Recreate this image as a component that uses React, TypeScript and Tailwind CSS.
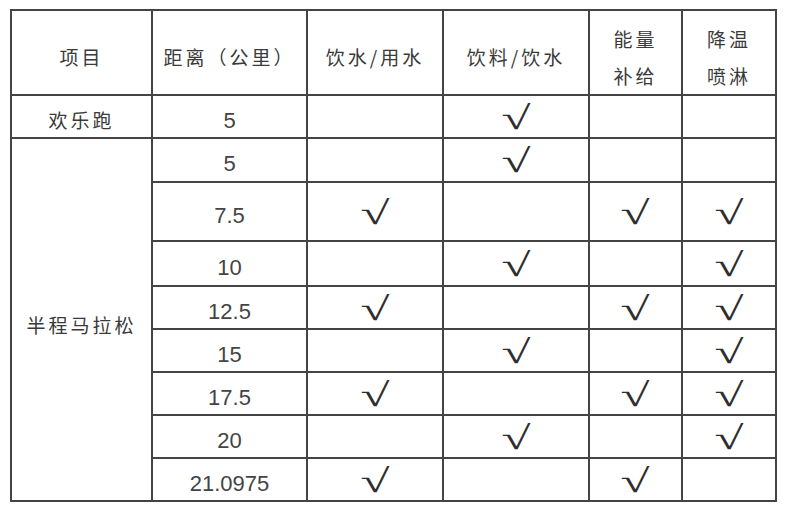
const rows: { d: string; c: boolean[] }[] = [
  { d: "5", c: [false, true, false, false] },
  { d: "7.5", c: [true, false, true, true] },
  { d: "10", c: [false, true, false, true] },
  { d: "12.5", c: [true, false, true, true] },
  { d: "15", c: [false, true, false, true] },
  { d: "17.5", c: [true, false, true, true] },
  { d: "20", c: [false, true, false, true] },
  { d: "21.0975", c: [true, false, true, false] },
];

const heights = ["h-[44px]", "h-[59px]", "h-[45px]", "h-[43px]", "h-[43px]", "h-[43px]", "h-[43px]", "h-[43px]"];

const cell = "border-2 border-[#444] text-center align-middle p-0 pt-[7px]";
const head = "border-2 border-[#444] text-center align-middle p-0 pt-[9px] font-normal";
const cjk = "font-['Noto_Sans_CJK_SC',sans-serif] text-[19px] tracking-[3px] text-[#3a3a3a]";
const num = "font-['Liberation_Sans',sans-serif] text-[22px] text-[#444]";

const Check = ({ on }: { on: boolean }) =>
  on ? (
    <span className="inline-block font-['Liberation_Serif',serif] text-[33px] leading-none scale-x-[1.6] -translate-y-[2px] text-[#2e2e2e]">
      √
    </span>
  ) : null;

export default function App() {
  return (
    <div className="w-[789px] h-[514px] bg-white pt-[9px] pl-[10px] text-[#333]">
      <table className="table-fixed border-collapse w-[767px]">
        <colgroup>
          <col className="w-[141px]" />
          <col className="w-[155px]" />
          <col className="w-[136px]" />
          <col className="w-[146px]" />
          <col className="w-[93px]" />
          <col className="w-[94px]" />
        </colgroup>
        <thead>
          <tr className="h-[85px]">
            <th className={`${head} ${cjk}`}>项目</th>
            <th className={`${head} ${cjk}`}>距离（公里）</th>
            <th className={`${head} ${cjk}`}>饮水/用水</th>
            <th className={`${head} ${cjk}`}>饮料/饮水</th>
            <th className={`${head} ${cjk} leading-[37px] pt-[8px]`}>
              能量
              <br />
              补给
            </th>
            <th className={`${head} ${cjk} leading-[37px] pt-[8px]`}>
              降温
              <br />
              喷淋
            </th>
          </tr>
        </thead>
        <tbody>
          <tr className="h-[43px]">
            <td className={`${cell} ${cjk}`}>欢乐跑</td>
            <td className={`${cell} ${num}`}>5</td>
            <td className={cell}></td>
            <td className={cell}>
              <Check on />
            </td>
            <td className={cell}></td>
            <td className={cell}></td>
          </tr>
          {rows.map((r, i) => (
            <tr key={r.d} className={heights[i]}>
              {i === 0 && (
                <td rowSpan={rows.length} className={`${cell} ${cjk} pt-[12px]`}>
                  半程马拉松
                </td>
              )}
              <td className={`${cell} ${num}`}>{r.d}</td>
              {r.c.map((on, j) => (
                <td key={j} className={cell}>
                  <Check on={on} />
                </td>
              ))}
            </tr>
          ))}
        </tbody>
      </table>
    </div>
  );
}
